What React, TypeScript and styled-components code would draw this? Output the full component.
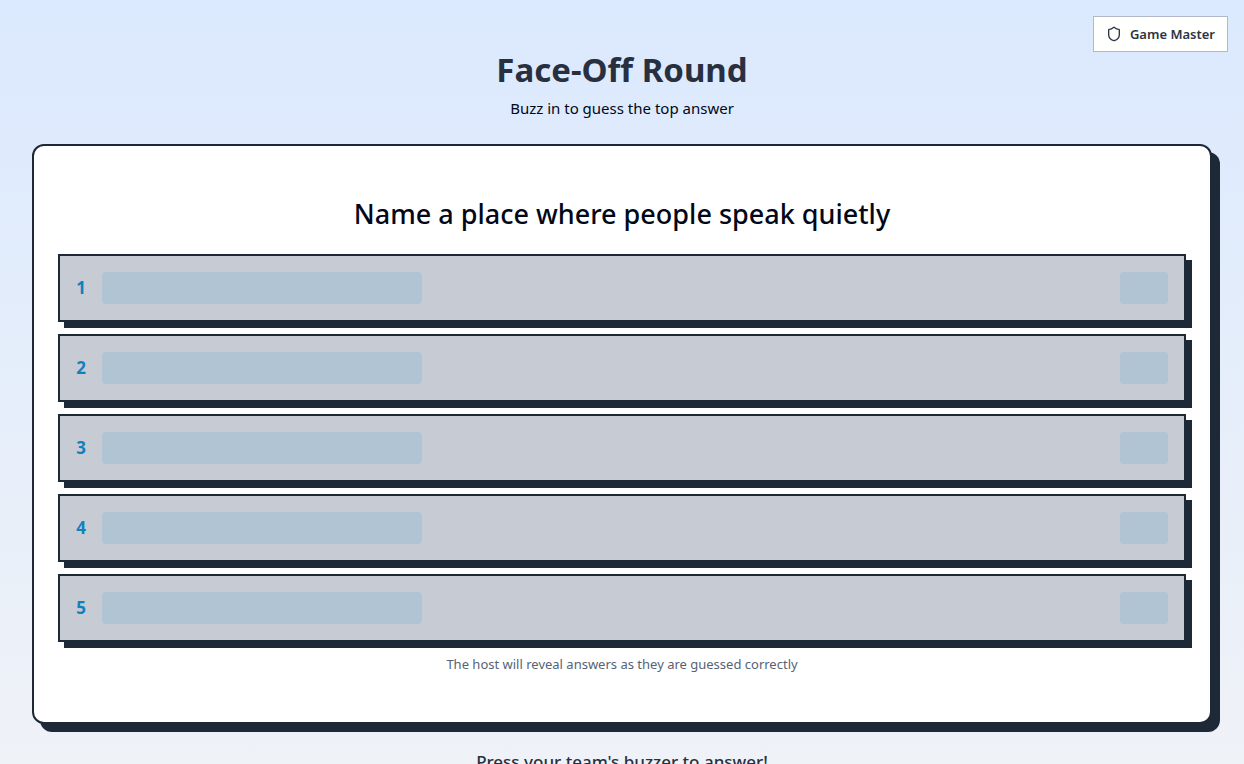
import React from "react";
import styled, { createGlobalStyle } from "styled-components";

const ink = "#1e2937";

const GlobalStyle = createGlobalStyle`
  *, *::before, *::after { box-sizing: border-box; }
  body {
    margin: 0;
    color: #020817;
    font-family: "Segoe UI", "Noto Sans", "Open Sans", sans-serif;
    font-size: 15px;
    line-height: 24px;
  }
  h1, h2, p, ol { margin: 0; padding: 0; }
`;

const Page = styled.div`
  position: relative;
  height: 100vh;
  overflow: hidden;
  padding: 48px 32px 0;
  background: linear-gradient(to bottom, #dbe9fe, #eff2f7);
`;

const MasterButton = styled.button`
  position: absolute;
  top: 16px;
  right: 16px;
  display: flex;
  align-items: center;
  gap: 8px;
  height: 36px;
  padding: 0 12px;
  border: 1px solid #b0b8c9;
  background: #fffffe;
  color: #2b3544;
  font: 600 13px/20px "Segoe UI", "Noto Sans", "Open Sans", sans-serif;
  cursor: pointer;
`;

const Header = styled.header`
  display: flex;
  flex-direction: column;
  gap: 4px;
  margin-bottom: 24px;
  text-align: center;
`;

const Title = styled.h1`
  color: #28303f;
  font-size: 33px;
  font-weight: 700;
  line-height: 44px;
`;

const Board = styled.main`
  display: flex;
  flex-direction: column;
  padding: 48px 24px 40px;
  border: 2px solid ${ink};
  border-radius: 12px;
  background: #fff;
  box-shadow: 8px 8px 0 ${ink};
  text-align: center;
`;

const Question = styled.h2`
  margin-bottom: 20px;
  font-size: 27px;
  font-weight: 500;
  line-height: 40px;
`;

const Answers = styled.ol`
  display: flex;
  flex-direction: column;
  gap: 12px;
  list-style: none;
`;

const AnswerRow = styled.li`
  display: flex;
  align-items: center;
  gap: 16px;
  height: 68px;
  padding: 0 16px;
  border: 2px solid ${ink};
  background: #c7cbd4;
  box-shadow: 6px 6px 0 ${ink};
`;

const Rank = styled.span`
  width: 10px;
  color: #0f82bd;
  font-size: 17px;
  font-weight: 700;
  line-height: 28px;
`;

const Placeholder = styled.span<{ $width: number; $end?: boolean }>`
  width: ${(p) => p.$width}px;
  height: 32px;
  margin-left: ${(p) => (p.$end ? "auto" : "0")};
  border-radius: 4px;
  background: #b1c4d3;
`;

const Hint = styled.p`
  margin: 12px 0 8px;
  color: #566376;
  font-size: 13px;
  line-height: 20px;
`;

const Prompt = styled.p`
  margin-top: 24px;
  color: #28303f;
  font-size: 17px;
  font-weight: 500;
  line-height: 28px;
  text-align: center;
`;

const ShieldIcon = () => (
  <svg width="16" height="16" viewBox="0 0 24 24" fill="none" stroke="currentColor" strokeWidth="2" strokeLinecap="round" strokeLinejoin="round" aria-hidden="true">
    <path d="M20 13c0 5-3.5 7.5-7.66 8.95a1 1 0 0 1-.67-.01C7.5 20.5 4 18 4 13V6a1 1 0 0 1 1-1c2 0 4.5-1.2 6.24-2.72a1.17 1.17 0 0 1 1.52 0C14.51 3.81 17 5 19 5a1 1 0 0 1 1 1z" />
  </svg>
);

const ranks = [1, 2, 3, 4, 5];

export default function App() {
  return (
    <Page>
      <GlobalStyle />
      <MasterButton type="button">
        <ShieldIcon />
        Game Master
      </MasterButton>
      <Header>
        <Title>Face-Off Round</Title>
        <p>Buzz in to guess the top answer</p>
      </Header>
      <Board>
        <Question>Name a place where people speak quietly</Question>
        <Answers>
          {ranks.map((rank) => (
            <AnswerRow key={rank}>
              <Rank>{rank}</Rank>
              <Placeholder $width={320} />
              <Placeholder $width={48} $end />
            </AnswerRow>
          ))}
        </Answers>
        <Hint>The host will reveal answers as they are guessed correctly</Hint>
      </Board>
      <Prompt>Press your team's buzzer to answer!</Prompt>
    </Page>
  );
}
